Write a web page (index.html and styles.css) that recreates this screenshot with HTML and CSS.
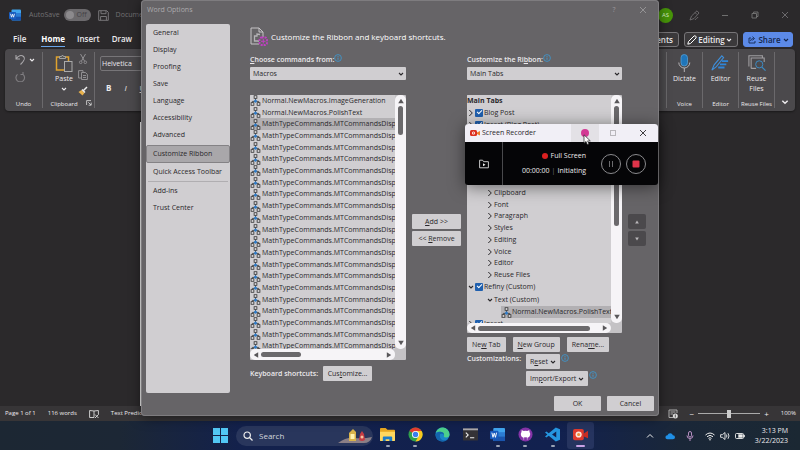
FILE: index.html
```
<!DOCTYPE html>
<html lang="en">
<head>
<meta charset="utf-8">
<title>Word Options</title>
<link rel="stylesheet" href="styles.css">
</head>
<body>
<svg class="defs" aria-hidden="true">
  <symbol id="macro" viewBox="0 0 11 12"><path d="M5.5 3.5v3M2 9V7h7v2" fill="none" stroke="#444" stroke-width="1"/><rect x="4" y=".8" width="3" height="2.8" fill="#e4e2e5" stroke="#333" stroke-width=".9"/><rect x=".7" y="8.4" width="3" height="2.8" fill="#e4e2e5" stroke="#333" stroke-width=".9"/><rect x="7.3" y="8.4" width="3" height="2.8" fill="#e4e2e5" stroke="#333" stroke-width=".9"/><path d="M5.5 4.6l2 2-2 2-2-2z" fill="#2f7cc9"/></symbol>
  <symbol id="down" viewBox="0 0 6 6"><path d="M1 2l2 2 2-2" fill="none" stroke="currentColor" stroke-width="1.1"/></symbol>
  <symbol id="right" viewBox="0 0 6 8"><path d="M1.3 1l3 3-3 3" fill="none" stroke="currentColor" stroke-width="1"/></symbol>
  <symbol id="info" viewBox="0 0 8 8"><circle cx="4" cy="4" r="3.4" fill="none" stroke="#3c9ad6" stroke-width=".8"/><path d="M4 3.6v2.2M4 2.1v.9" stroke="#3c9ad6" stroke-width=".9"/></symbol>
  <symbol id="tri" viewBox="0 0 6 6"><path d="M3 .8L5.8 5.2H.2z" fill="currentColor"/></symbol>
  <symbol id="cross" viewBox="0 0 8 8"><path d="M1 1l6 6M7 1L1 7" stroke="currentColor" stroke-width=".9"/></symbol>
</svg>

<main class="word">
  <header class="titlebar">
    <svg class="logo" viewBox="0 0 12 12"><rect x="2.5" y=".5" width="9.500" height="11" rx="1" fill="#41a5ee"/><path d="M2.500 4h9.500v3.500H2.500z" fill="#2b7cd3"/><path d="M2.500 7.500h9.500v3a1 1 0 0 1-1 1H3.500a1 1 0 0 1-1-1z" fill="#1551ae"/><rect y="3" width="7" height="7" rx=".8" fill="#1a5dbe"/><path d="M1.500 4.800l1 3.400 1-3 1 3 1-3.400" fill="none" stroke="#fff" stroke-width=".8"/></svg>
    <span>AutoSave</span>
    <button class="toggle" type="button" aria-label="AutoSave"><i></i>Off</button>
    <svg class="ico11" viewBox="0 0 11 11"><path d="M.7.7h8l1.600 1.600v8H.7zM3 .7v3h5v-3M2.600 10.300V6.500h5.800v3.800" fill="none" stroke="#777578" stroke-width="1"/></svg>
    <span class="doc">Document1</span>
    <span class="avatar">AS</span>
    <svg class="ico11 pen" viewBox="0 0 11 11"><path d="M1 10l1.500-4L8 .8 10 3 5 8.500zM6 2.500l2 2M6 10c1-2 2-1 3-3" fill="none" stroke="#706e70" stroke-width=".9"/></svg>
    <svg class="ico8" viewBox="0 0 8 8"><path d="M1 4.500h6" stroke="#777" stroke-width=".9"/></svg>
    <svg class="ico8" viewBox="0 0 8 8"><path d="M1 2.500h4.500V7H1zM2.600 2.300V1H7v4.500H5.700" fill="none" stroke="#777" stroke-width=".9"/></svg>
    <svg class="ico8 dim"><use href="#cross"/></svg>
  </header>
  <nav class="tabs">
    <a href="#file">File</a><a href="#home" class="on">Home</a><a href="#insert">Insert</a><a href="#draw">Draw</a>
    <button type="button" class="pill comments">Comments</button>
    <button type="button" class="pill"><svg class="ico10" viewBox="0 0 10 10"><path d="M.8 9.200L1.500 6.500 7 1q1-.6 1.700.1T9 3L3.500 8.500z" fill="none" stroke="#fff" stroke-width="1"/></svg>Editing<svg class="ico6"><use href="#down"/></svg></button>
    <button type="button" class="pill share"><svg class="ico8" viewBox="0 0 8 8"><path d="M3 2H1v5h6V5M2.500 5q.3-2.500 3-2.500M4.500.7l2 1.800-2 1.800" fill="none" stroke="#122850" stroke-width=".9"/></svg>Share<svg class="ico6"><use href="#down"/></svg></button>
  </nav>
  <section class="ribbon">
    <div class="group undo">
      <div class="stack">
        <span class="line"><svg class="ico11" viewBox="0 0 11 11"><path d="M1 1v4h4M1.200 4.800C3 1.500 6.500.5 8.500 2.500s1 4-3 8" fill="none" stroke="#a9a7aa" stroke-width="1.1"/></svg><svg class="ico6"><use href="#down"/></svg></span>
        <svg class="ico11" viewBox="0 0 11 11"><path d="M8 1v2.500h-2.500M8 3.300a4.300 4.300 0 1 1-5.500 0" fill="none" stroke="#807e81" stroke-width="1.100"/></svg>
      </div>
      <small>Undo</small>
    </div>
    <div class="group clip">
      <div class="paste">
        <button type="button" class="tool"><svg class="ico18" viewBox="0 0 18 18"><path d="M11 16H1.500V3H5m5 0h3.500v4" fill="none" stroke="#e0a32e" stroke-width="1.500"/><path d="M4.500 4.500v-2h2q1-3 2 0h2v2z" fill="#555" stroke="#aaa" stroke-width=".9"/><rect x="9.500" y="7.500" width="7.500" height="10" fill="#4c4a4d" stroke="#aaa"/></svg>Paste<svg class="ico6"><use href="#down"/></svg></button>
        <div class="minis">
          <svg class="ico10" viewBox="0 0 10 10"><path d="M2.500 0l4 7M7.500 0l-4 7" stroke="#99979a" stroke-width=".9"/><circle cx="2.700" cy="8.300" r="1.300" fill="none" stroke="#99979a" stroke-width=".8"/><circle cx="7.300" cy="8.300" r="1.300" fill="none" stroke="#99979a" stroke-width=".8"/></svg>
          <svg class="ico10" viewBox="0 0 10 10"><path d="M3 8H.6V.6H5V2M3.500 2.500h4L9.400 4.500v5H3.500zM5 5.500h3M5 7.500h3" fill="none" stroke="#99979a" stroke-width=".9"/></svg>
          <svg class="ico10" viewBox="0 0 10 10"><path d="M.5 6l3-2 3 3-2 2.500z" fill="#e8b04a"/><path d="M4 3.500l3 3M5.500 4.500L9 1" stroke="#eee" stroke-width="1.500"/></svg>
        </div>
      </div>
      <small>Clipboard<svg class="ico6 launch" viewBox="0 0 6 6"><path d="M.6 5V.6H5M2.300 2.300L5 5M5.200 2.600v2.600H2.600" fill="none" stroke="#ddd" stroke-width=".8"/></svg></small>
    </div>
    <div class="group font">
      <label><select aria-label="Font"><option>Helvetica</option></select></label>
      <div class="biu"><b>B</b><i>I</i><u>U</u></div>
    </div>
    <div class="group end"><button type="button" class="tool"><svg class="ico18" viewBox="0 0 18 18"><rect x="6" y=".5" width="6.500" height="11.500" rx="3.200" fill="#1f75b9" stroke="#5aa6dd" stroke-width=".7"/><path d="M3.800 8.500a5.500 5.500 0 0 0 11 0M9.300 14v4" fill="none" stroke="#b5b3b6"/></svg>Dictate</button><small>Voice</small></div>
    <div class="group end"><button type="button" class="tool"><svg class="ico18" viewBox="0 0 20 18"><path d="M1 17l2.500-6L12 1l2 2-8 10z" fill="none" stroke="#3d8fdc" stroke-width="1.200"/><path d="M12 7h7M10 10.500h7M8 14h7" stroke="#2f86da" stroke-width="2"/></svg>Editor</button><small>Editor</small></div>
    <div class="group end"><button type="button" class="tool"><svg class="ico18" viewBox="0 0 20 18"><path d="M1 13V1h15v3M3.500 15V3.500H18V8M3.500 15H9" fill="none" stroke="#a09ea1" stroke-width="1.200"/><circle cx="12.500" cy="10.500" r="4" fill="#4c4a4d" stroke="#3c8bc4" stroke-width="1.100"/><path d="M15.500 13.500L19.500 17.500" stroke="#3c8bc4" stroke-width="1.300"/></svg><span>Reuse<br>Files</span></button><small>Reuse Files</small></div>
    <div class="group more"><svg class="ico8"><use href="#down"/></svg></div>
  </section>
  <div class="canvas"><div class="page"></div></div>
  <footer class="status">
    <span>Page 1 of 1</span><span>116 words</span>
    <svg class="ico10" viewBox="0 0 10 9"><path d="M5 1.500v6.500H.6V1zM5 1.500L9.400 1v4M6 5l3.500 3.500M9.500 5L6 8.500" fill="none" stroke="#ddd" stroke-width=".9"/></svg>
    <span>Text Predictions: On</span>
    <svg class="ico10 focus" viewBox="0 0 10 10"><path d="M5 8.500H1V1h8v3M2.500 3h5M2.500 5H5" fill="none" stroke="#bbb" stroke-width=".9"/><circle cx="7.300" cy="7" r="2.500" fill="#ddd"/><path d="M7.300 5.500v3" stroke="#333" stroke-width=".8"/></svg>
    <span class="zoom"><span>−</span><input type="range" aria-label="Zoom" value="50"><span>+</span></span>
    <span>100%</span>
  </footer>
</main>

<section class="dialog" role="dialog" aria-label="Word Options">
  <header class="dlg-title"><span>Word Options</span><button type="button" class="bare">?</button><button type="button" class="bare" aria-label="Close"><svg class="ico8"><use href="#cross"/></svg></button></header>
  <div class="dlg-body">
    <nav class="side">
      <a href="#general">General</a><a href="#display">Display</a><a href="#proofing">Proofing</a><a href="#save">Save</a><a href="#language">Language</a><a href="#access">Accessibility</a><a href="#advanced">Advanced</a>
      <a href="#ribbon" class="sel">Customize Ribbon</a><a href="#qat">Quick Access Toolbar</a><hr><a href="#addins">Add-ins</a><a href="#trust">Trust Center</a>
    </nav>
    <div class="pane">
      <h1><svg class="ico20" viewBox="0 0 20 20"><path d="M9 17H1V1h8l4 4v5M9 1v4h4" fill="none" stroke="#c5c3c6" stroke-width="1"/><path d="M10 7.500L7 7v2H4.500v5H9" fill="none" stroke="#b5b3b6" stroke-width="1.300"/><rect x="9.500" y="10.500" width="7.500" height="7.500" rx="2" fill="none" stroke="#c13fc4" stroke-width="1.800" stroke-dasharray="2 1"/><path d="M11 14.300h4.500M13.300 12v4.500" stroke="#c13fc4"/></svg>Customize the Ribbon and keyboard shortcuts.</h1>
      <div class="cols">
        <div class="col">
          <label for="from"><span><u>C</u>hoose commands from:</span><svg class="ico8"><use href="#info"/></svg></label>
          <div class="combo"><select id="from"><option>Macros</option></select><svg class="ico6"><use href="#down"/></svg></div>
          <div class="box">
            <div class="view"><ul class="macros">
              <li><svg><use href="#macro"/></svg>Normal.NewMacros.ImageGeneration</li>
              <li><svg><use href="#macro"/></svg>Normal.NewMacros.PolishText</li>
              <li class="hit"><svg><use href="#macro"/></svg>MathTypeCommands.MTCommandsDisp</li>
              <li><svg><use href="#macro"/></svg>MathTypeCommands.MTCommandsDisp</li>
              <li><svg><use href="#macro"/></svg>MathTypeCommands.MTCommandsDisp</li>
              <li><svg><use href="#macro"/></svg>MathTypeCommands.MTCommandsDisp</li>
              <li><svg><use href="#macro"/></svg>MathTypeCommands.MTCommandsDisp</li>
              <li><svg><use href="#macro"/></svg>MathTypeCommands.MTCommandsDisp</li>
              <li><svg><use href="#macro"/></svg>MathTypeCommands.MTCommandsDisp</li>
              <li><svg><use href="#macro"/></svg>MathTypeCommands.MTCommandsDisp</li>
              <li><svg><use href="#macro"/></svg>MathTypeCommands.MTCommandsDisp</li>
              <li><svg><use href="#macro"/></svg>MathTypeCommands.MTCommandsDisp</li>
              <li><svg><use href="#macro"/></svg>MathTypeCommands.MTCommandsDisp</li>
              <li><svg><use href="#macro"/></svg>MathTypeCommands.MTCommandsDisp</li>
              <li><svg><use href="#macro"/></svg>MathTypeCommands.MTCommandsDisp</li>
              <li><svg><use href="#macro"/></svg>MathTypeCommands.MTCommandsDisp</li>
              <li><svg><use href="#macro"/></svg>MathTypeCommands.MTCommandsDisp</li>
              <li><svg><use href="#macro"/></svg>MathTypeCommands.MTCommandsDisp</li>
              <li><svg><use href="#macro"/></svg>MathTypeCommands.MTCommandsDisp</li>
              <li><svg><use href="#macro"/></svg>MathTypeCommands.MTCommandsDisp</li>
              <li><svg><use href="#macro"/></svg>MathTypeCommands.MTCommandsDisp</li>
              <li><svg><use href="#macro"/></svg>MathTypeCommands.MTCommandsDisp</li>
            </ul></div>
            <div class="vbar"><svg class="ico6"><use href="#tri"/></svg><i class="short"></i><svg class="ico6 flip"><use href="#tri"/></svg></div>
            <div class="hbar"><svg class="ico6 west"><use href="#tri"/></svg><i class="short"></i><svg class="ico6 east"><use href="#tri"/></svg></div>
          </div>
          <div class="keys"><span>Keyboard shortcuts:</span><button type="button" class="btn">Cus<u>t</u>omize...</button></div>
        </div>
        <div class="mid"><button type="button" class="btn"><u>A</u>dd &gt;&gt;</button><button type="button" class="btn">&lt;&lt; <u>R</u>emove</button></div>
        <div class="col">
          <label for="tabs"><span>Customize the Ri<u>b</u>bon:</span><svg class="ico8"><use href="#info"/></svg></label>
          <div class="combo"><select id="tabs"><option>Main Tabs</option></select><svg class="ico6"><use href="#down"/></svg></div>
          <div class="box tree">
            <div class="view">
              <div class="row"><b>Main Tabs</b></div>
              <div class="row l0"><svg><use href="#right"/></svg><label><input type="checkbox" checked>Blog Post</label></div>
              <div class="row l0"><svg><use href="#right"/></svg><label><input type="checkbox" checked>Insert (Blog Post)</label></div>
              <div class="sub">
                <div class="row l1"><svg><use href="#right"/></svg>Clipboard</div>
                <div class="row l1"><svg><use href="#right"/></svg>Font</div>
                <div class="row l1"><svg><use href="#right"/></svg>Paragraph</div>
                <div class="row l1"><svg><use href="#right"/></svg>Styles</div>
                <div class="row l1"><svg><use href="#right"/></svg>Editing</div>
                <div class="row l1"><svg><use href="#right"/></svg>Voice</div>
                <div class="row l1"><svg><use href="#right"/></svg>Editor</div>
                <div class="row l1"><svg><use href="#right"/></svg>Reuse Files</div>
              </div>
              <div class="row l0"><svg><use href="#down"/></svg><label><input type="checkbox" checked>Refiny (Custom)</label></div>
              <div class="row l1 text"><svg><use href="#down"/></svg>Text (Custom)</div>
              <div class="row l2"><span class="hit"><svg><use href="#macro"/></svg>Normal.NewMacros.PolishText</span></div>
              <div class="row l0"><svg><use href="#right"/></svg><label><input type="checkbox" checked>Insert</label></div>
            </div>
            <div class="vbar"><svg class="ico6"><use href="#tri"/></svg><i class="long"></i><svg class="ico6 flip"><use href="#tri"/></svg></div>
            <div class="hbar"><svg class="ico6 west"><use href="#tri"/></svg><i class="long"></i><svg class="ico6 east"><use href="#tri"/></svg></div>
          </div>
          <div class="newrow"><button type="button" class="btn">Ne<u>w</u> Tab</button><button type="button" class="btn"><u>N</u>ew Group</button><button type="button" class="btn">Rena<u>m</u>e...</button></div>
          <div class="custom"><span>Customizations:</span>
            <div class="resets">
              <div><button type="button" class="btn">R<u>e</u>set<svg class="ico6"><use href="#down"/></svg></button><svg class="ico8"><use href="#info"/></svg></div>
              <div><button type="button" class="btn">Im<u>p</u>ort/Export<svg class="ico6"><use href="#down"/></svg></button><svg class="ico8"><use href="#info"/></svg></div>
            </div>
          </div>
        </div>
        <div class="mid order"><button type="button" class="btn" aria-label="Move up"><svg><use href="#tri"/></svg></button><button type="button" class="btn" aria-label="Move down"><svg class="flip"><use href="#tri"/></svg></button></div>
      </div>
    </div>
  </div>
  <footer class="dlg-foot"><button type="button" class="btn">OK</button><button type="button" class="btn">Cancel</button></footer>
</section>

<section class="recorder" role="dialog" aria-label="Screen Recorder">
  <header><svg class="cam" viewBox="0 0 10 8"><rect y="1" width="7" height="6" rx="1.500" fill="#dc2f1e"/><path d="M7 3.500L10 2v4.500L7 5z" fill="#ef7d2b"/><circle cx="3.500" cy="4" r="1.600" fill="#fff"/><circle cx="3.500" cy="4" r=".8" fill="#dc2f1e"/></svg><span>Screen Recorder</span><i class="mini"><b></b></i><i class="max"></i><button type="button" class="bare" aria-label="Close"><svg class="ico8"><use href="#cross"/></svg></button></header>
  <div class="rec-body">
    <div class="folder"><svg class="ico10" viewBox="0 0 10 10"><path d="M.6 8.800V1.200h3l1 1.500h4.800v6.100z" fill="none" stroke="#ddd" stroke-width=".9"/><path d="M4 4.300l2.500 1.500L4 7.300z" fill="#eee"/></svg></div>
    <div class="info"><span><i class="dot"></i>Full Screen</span><span>00:00:00<em>|</em>Initiating</span></div>
    <button type="button" class="round" aria-label="Pause"><svg viewBox="0 0 8 8"><path d="M2.500 1v6M5.500 1v6" stroke="#77777a" stroke-width=".9"/></svg></button>
    <button type="button" class="round" aria-label="Stop"><svg viewBox="0 0 8 8"><rect x=".5" y=".5" width="7" height="7" rx="1" fill="#e0344a"/></svg></button>
  </div>
  <svg class="cursor" viewBox="0 0 8 12"><path d="M1 .8v8.400l2-1.800 1.300 3.200 1.600-.7-1.300-3H7.300z" fill="#fff" stroke="#222" stroke-width=".7"/></svg>
</section>

<footer class="taskbar">
  <div class="dock">
    <button type="button" class="bare start" aria-label="Start"><svg viewBox="0 0 15 15"><path d="M0 0h7v7H0zM8 0h7v7H8zM0 8h7v7H0zM8 8h7v7H8z" fill="#52c8f5"/></svg></button>
    <label class="search"><svg class="ico10" viewBox="0 0 10 10"><circle cx="4.200" cy="4.200" r="3.200" fill="none" stroke="#eee" stroke-width="1.200"/><path d="M6.500 6.500L9.500 9.500" stroke="#eee" stroke-width="1.300"/></svg><input type="search" placeholder="Search" aria-label="Search">
      <svg class="art" viewBox="0 0 34 16"><path d="M0 15q8-6 17-5t17-1q-2 6-8 6z" fill="#8b7f86"/><path d="M12 4l3-3 3 3v9h-7V5z" fill="#d9b34a"/><rect x="12.500" y="6" width="4" height="5" fill="#fff3b0"/><path d="M22 6l2-3 2 3 1 6q-3 2-6 0z" fill="#c43c44"/><circle cx="24" cy="9" r="1.500" fill="#f5c2a0"/></svg></label>
    <div class="apps">
      <a href="#explorer"><svg viewBox="0 0 16 16"><path d="M0 2q0-1 1-1h5l2 2h7q1 0 1 1v10H0z" fill="#e9a820"/><path d="M0 5h16v9q0 1-1 1H1q-1 0-1-1z" fill="#ffd75e"/><path d="M3 15v-4q0-1 1-1h8q1 0 1 1v4h-3v-2H6v2z" fill="#1c7cc8"/></svg><i></i></a>
      <a href="#chrome"><svg viewBox="0 0 16 16"><circle cx="8" cy="8" r="7.500" fill="#2fa04c"/><path d="M8 8L1.500 4.200A7.500 7.500 0 0 1 14.500 4.200z" fill="#e53c30"/><path d="M8 4.200h6.500A7.500 7.500 0 0 1 8 15.500l3.500-6z" fill="#fbc81e"/><circle cx="8" cy="8" r="3.800" fill="#fff"/><circle cx="8" cy="8" r="2.900" fill="#3b7ded"/></svg><i></i></a>
      <a href="#edge"><svg viewBox="0 0 16 16"><circle cx="8" cy="8" r="7.500" fill="#1a86c8"/><path d="M.8 6A7.500 7.500 0 0 1 15.500 8q0 3.200-3.500 3.200-3 0-2.500-1.500C10.500 7 8 5 5 5 3 5 1.500 5.500.8 6z" fill="#4ccf8c"/><path d="M5.500 7.500q-1.500 5 3 6.500 3 .5 5-1-1.800 2.500-5.500 2.500Q1 15 .5 8.500 2 5 5.500 5q4 0 4.200 3.500-2-2-4.200-1z" fill="#1464ac"/></svg></a>
      <a href="#terminal"><svg viewBox="0 0 16 16"><rect y="1.500" width="16" height="13" rx="1" fill="#343236"/><path d="M0 1.500h16v2H0z" fill="#aaa8ac"/><path d="M3 6l2.500 2.500L3 11M7.500 11.500H12" fill="none" stroke="#eee" stroke-width="1.200"/></svg></a>
      <a href="#word"><svg viewBox="0 0 16 16"><rect x="3.500" y="1" width="12.500" height="14" rx="1" fill="#41a5ee"/><path d="M3.500 5.500H16V10H3.500z" fill="#2b7cd3"/><path d="M3.500 10H16v5H3.500z" fill="#1a55ae"/><rect y="4" width="9" height="9" rx="1" fill="#185abd"/><path d="M2 6l1.200 5 1.300-4.500L5.800 11 7 6" fill="none" stroke="#fff"/></svg><i></i></a>
      <a href="#github"><svg viewBox="0 0 16 16"><circle cx="8" cy="8" r="7.500" fill="#8534a8"/><path d="M6 13.500v-2q-3-.8-3-4 0-1.200.8-2.200-.3-1 .2-1.900 1.200 0 2 .8 2-.5 4 0 .8-.8 2-.8.500 1 .2 1.900.8 1 .8 2.200 0 3.200-3 4v2z" fill="#fff"/><path d="M6.500 14v-3h3v3z" fill="#8534a8"/></svg><i></i></a>
      <a href="#code"><svg viewBox="0 0 16 16"><path d="M11.500.5L16 2.500v11l-4.500 2L4 9.300 1.500 11.200 0 10.200 2.500 8 0 5.800l1.500-1L4 6.700zM12 4.800L7.500 8l4.500 3.200z" fill="#2596e0" fill-rule="evenodd"/></svg><i></i></a>
      <a href="#recorder" class="live"><svg viewBox="0 0 16 16"><rect y="2" width="11.500" height="12" rx="2" fill="#e03a2e"/><path d="M11.500 7L16 4v8l-4.500-2z" fill="#c92d22"/><circle cx="6" cy="8" r="3.300" fill="#fde8dc"/><circle cx="6" cy="8" r="1.700" fill="#f08c3a"/></svg><i></i></a>
    </div>
  </div>
  <div class="tray">
    <svg class="ico8 up" viewBox="0 0 8 8"><path d="M1 5.500l3-3 3 3" fill="none" stroke="#eee" stroke-width="1"/></svg>
    <svg class="ico10 cloud" viewBox="0 0 12 10"><path d="M3 9a2.500 2.500 0 0 1 0-5 3.500 3.500 0 0 1 6.500 0A2.500 2.500 0 0 1 9.500 9z" fill="#1f8fe6"/></svg>
    <svg class="ico10 mic" viewBox="0 0 10 10"><rect x="3.500" y=".5" width="3" height="5.500" rx="1.500" fill="none" stroke="#c79ad0" stroke-width=".9"/><path d="M2 4.500q0 3 3 3t3-3M5 7.500V10" fill="none" stroke="#c79ad0" stroke-width=".9"/></svg>
    <svg class="ico10" viewBox="0 0 10 10"><path d="M.5 4q4.500-4 9 0M2 5.700q3-2.800 6 0M3.500 7.400q1.500-1.500 3 0" fill="none" stroke="#eee" stroke-width="1"/><circle cx="5" cy="8.700" r=".8" fill="#eee"/></svg>
    <svg class="ico10" viewBox="0 0 10 10"><path d="M.6 3.700h1.800L5 1.500v7L2.400 6.300H.6zM6.400 3.500q1 1.500 0 3M8 2.200q2 2.800 0 5.600" fill="none" stroke="#eee" stroke-width=".9"/></svg>
    <svg class="ico10" viewBox="0 0 10 10"><rect x=".5" y="2.500" width="8" height="5" rx="1" fill="none" stroke="#eee" stroke-width=".9"/><path d="M3.500 3.500h4v3h-4zM9.300 4h.6v2h-.6z" fill="#eee" stroke="#eee" stroke-width=".4"/></svg>
    <time>3:13 PM<br>3/22/2023</time>
  </div>
</footer>
</body>
</html>
```
FILE: styles.css
```
* { box-sizing: border-box; }
body { margin: 0; height: 100vh; display: flex; flex-direction: column; position: relative; overflow: hidden; background: #2b292b; color: #eceaed; font: 7px/1.4 "Open Sans", "Noto Sans", sans-serif; }
button, input, select { font: inherit; color: inherit; margin: 0; padding: 0; border: 0; background: none; border-radius: 0; }
a { color: inherit; text-decoration: none; }
svg { display: block; flex: none; }
ul { list-style: none; margin: 0; padding: 0; }
u { text-underline-offset: 1px; text-decoration-thickness: 1px; }
.defs { position: absolute; width: 0; height: 0; }
.ico6 { width: 6px; height: 6px; }
.ico8 { width: 8px; height: 8px; }
.ico10 { width: 10px; height: 10px; }
.ico11 { width: 11px; height: 11px; }
.ico18 { width: 18px; height: 18px; }
.ico20 { width: 20px; height: 20px; }
.flip { transform: rotate(180deg); }
.west { transform: rotate(-90deg); }
.east { transform: rotate(90deg); }
.bare { display: grid; place-items: center; }

/* Word window */
.word { flex: 1; min-height: 0; display: flex; flex-direction: column; }
.titlebar { height: 30px; display: flex; align-items: center; padding: 0 11px 0 9px; color: #737174; }
.titlebar .logo { width: 12px; height: 12px; margin-right: 8px; }
.toggle { width: 27px; height: 12px; margin: 0 7px 0 4px; padding: 0 4px 0 2px; border-radius: 6px; background: #6c6a6d; color: #444245; display: flex; align-items: center; justify-content: space-between; }
.toggle i { width: 8px; height: 8px; border-radius: 50%; background: #8c8a8d; }
.doc { margin-left: 7px; }
.avatar { width: 15px; height: 15px; margin-left: auto; border-radius: 50%; background: #479409; color: #d8edc8; font-size: 6px; line-height: 15px; text-align: center; }
.pen { margin: 0 21px 0 16px; }
.titlebar > .ico8 + .ico8 { margin-left: 22px; }
.tabs { height: 19px; display: flex; align-items: center; padding: 0 7px 0 13px; font-size: 8px; font-weight: 600; }
.tabs a { margin-right: 12px; line-height: 14px; border-bottom: 1px solid transparent; }
.tabs a:first-child { margin-right: 15px; }
.tabs .on { font-weight: 700; border-color: #6aa5e8; color: #fff; }
.pill { height: 15px; display: flex; align-items: center; justify-content: space-between; width: 54px; padding: 0 5px 0 2px; border: 1px solid #777578; border-radius: 3px; background: #3b393b; font-size: 8px; }
.pill + .pill { margin-left: 5px; }
.comments { width: 64px; margin-left: auto; justify-content: flex-end; }
.share { width: 50px; padding: 0 3px 0 4px; border-color: #5c8ae8; background: #5c8ae8; color: #14264c; }
.ribbon { height: 62px; margin: 0 5px; display: flex; border-radius: 4px; background: #4b494c; box-shadow: 0 1px 2px #1a191a; }
.group { margin: 3px 0; border-right: 1px solid #6b696c; display: flex; flex-direction: column; align-items: center; justify-content: space-between; width: 36px; }
.group small { font-size: 6px; line-height: 8px; white-space: nowrap; display: flex; }
.undo { width: 38px; }
.stack { display: grid; gap: 6px; margin: 2px 0 0 2px; }
.line { display: flex; align-items: center; gap: 3px; }
.clip { width: 52px; }
.clip small { gap: 8px; padding-left: 5px; }
.paste { display: flex; gap: 5px; padding-left: 6px; }
.tool { display: flex; flex-direction: column; align-items: center; line-height: 10px; padding-top: 2px; gap: 2px; }
.minis { display: grid; gap: 6px; align-content: start; padding-top: 2px; }
.font { margin-left: 5px; border: 0; width: 120px; align-items: stretch; justify-content: flex-start; gap: 12px; }
.font select { width: 100%; height: 15px; margin-top: 4px; padding-left: 1px; border: 1px solid #777578; border-radius: 2px; appearance: none; }
.biu { display: flex; gap: 13px; padding-left: 6px; font-size: 8px; line-height: 10px; }
.end:nth-of-type(4) { margin-left: auto; border-left: 1px solid #6b696c; width: 37px; }
.more { border: 0; width: 20px; justify-content: flex-end; padding-bottom: 2px; }
.canvas { flex: 1; padding: 11px 160px 0 140px; }
.page { height: 100%; background: #f2f2f2; }
.status { height: 15px; display: flex; align-items: center; gap: 12px; padding: 0 4px 0 5px; background: #373537; font-size: 6px; }
.status .focus { margin-left: auto; }
.zoom { display: flex; align-items: center; gap: 4px; font-size: 8px; }
.zoom input { width: 62px; height: 9px; appearance: none; background: linear-gradient(#aaa, #aaa) center / 100% 1px no-repeat; }
.zoom input::-webkit-slider-thumb { appearance: none; width: 4px; height: 8px; background: #ccc; }

/* Options dialog */
.dialog { position: absolute; left: 141px; top: 0; width: 518px; height: 416px; display: flex; flex-direction: column; border-radius: 4px; background: #666467; box-shadow: inset 0 0 0 1px #7e7c7f, 0 2px 12px rgba(0, 0, 0, .5); }
.dlg-title { height: 24px; display: flex; padding: 3px 9px 0 6px; color: #acaaad; line-height: 13px; }
.dlg-title span { margin-right: auto; }
.dlg-title .bare { width: 14px; height: 13px; color: #9a989b; }
.dlg-title .bare:first-of-type { margin-right: 15px; }
.dlg-body { flex: 1; min-height: 0; display: flex; padding-left: 5px; }
.side { width: 84px; border-radius: 2px; background: #d0ced1; color: #2a282b; }
.side a { display: block; line-height: 17px; padding-left: 7px; white-space: nowrap; }
.side .sel { margin-top: 2px; line-height: 16px; border: 1px solid #848285; border-radius: 2px; background: #a9a7aa; padding-left: 6px; }
.side hr { margin: 1px 2px; border: 0; border-top: 1px solid #b0aeb1; }
.side hr + a { margin-top: -1px; }
.pane { padding-left: 20px; }
h1 { display: flex; align-items: center; gap: 1px; margin: 3px 0 6px; height: 20px; font-size: 8px; font-weight: 400; color: #fff; }
.cols { display: grid; grid-template-columns: 156px 49px 155px 18px; column-gap: 6px; }
.col { min-width: 0; }
.col > label { display: flex; align-items: center; height: 14px; font-weight: 600; }
.col > label .ico8 { margin-bottom: 4px; }
.combo { display: grid; align-items: center; height: 13px; margin-bottom: 15px; border-radius: 1px; background: #d0ced1; color: #2a282b; }
.combo > * { grid-area: 1 / 1; }
.combo select { width: 100%; height: 13px; padding-left: 3px; appearance: none; }
.combo svg { justify-self: end; margin-right: 2px; pointer-events: none; }
.box { display: grid; grid-template: 254px 11px / 1fr 11px; border-radius: 1px; background: #c4c2c5; color: #2a282b; overflow: hidden; }
.tree { grid-template-rows: 228px 10px; }
.view { overflow: hidden; background: #d0ced1; white-space: nowrap; }
.macros { height: 257px; display: flex; flex-direction: column; }
.macros li { flex: 1 1 0; min-height: 0; display: flex; align-items: center; gap: 1px; }
.macros svg, .l2 svg { width: 11px; height: 11px; }
.hit { background: #b2b0b3; }
.vbar, .hbar { display: flex; align-items: center; background: #f6f4f7; color: #59575a; }
.vbar { flex-direction: column; padding: 3px 0; border-radius: 5px; }
.hbar { padding: 0 3px; border-radius: 5px; }
.vbar i { width: 5px; margin: 2px 0 auto; border-radius: 3px; background: #6b696c; }
.hbar i { height: 5px; margin: 0 auto 0 2px; border-radius: 3px; background: #6b696c; }
.vbar .short { height: 29px; }
.hbar .short { width: 40px; }
.vbar .long { height: 120px; }
.hbar .long { width: 112px; }
.row { display: flex; align-items: center; height: 12px; }
.row label { display: flex; align-items: center; gap: 1px; }
.row input { width: 8px; height: 8px; appearance: none; border-radius: 1px; background: #1f5fae; display: grid; place-items: center; }
.row input::after { content: ""; width: 4px; height: 2px; border: solid #fff; border-width: 0 0 1px 1px; transform: translateY(-1px) rotate(-45deg); }
.l0 { padding-left: 1px; }
.l0 > svg, .l1 > svg { width: 6px; height: 8px; margin-right: 1px; }
.l1 { padding-left: 20px; }
.l2 { padding-left: 34px; }
.l2 .hit { display: flex; align-items: center; width: 100%; height: 12px; }
.sub { height: 94px; margin-top: 56px; display: flex; flex-direction: column; }
.sub .row { flex: 1; height: auto; }
.text { margin-top: 1px; }
.btn { height: 15px; display: flex; align-items: center; justify-content: center; border-radius: 1px; background: #d0ced1; color: #2a282b; white-space: pre; }
.keys { display: flex; align-items: center; justify-content: space-between; padding-right: 34px; margin-top: 6px; font-weight: 600; }
.keys .btn { width: 49px; font-weight: 400; }
.mid { padding-top: 161px; display: grid; gap: 2px; align-content: start; }
.order .btn { background: #4b494c; color: #b9b7ba; border-radius: 2px; }
.order svg { width: 4px; height: 4px; }
.newrow { display: flex; gap: 7px; margin: 4px 0 2px; }
.newrow .btn { flex: none; padding: 0 5px; }
.custom { display: flex; justify-content: space-between; font-weight: 600; }
.custom .btn { padding: 0 4px; font-weight: 400; }
.custom .btn svg { margin-left: 2px; }
.resets { width: 96px; display: grid; gap: 2px; }
.resets > div { display: flex; }
.resets .ico8 { margin-left: 1px; }
.dlg-foot { display: flex; justify-content: flex-end; gap: 6px; padding: 3px 5px 5px; }
.dlg-foot .btn { width: 47px; }

/* Recorder window */
.recorder { position: absolute; left: 465px; top: 124px; width: 193px; height: 61px; display: flex; flex-direction: column; border-radius: 3px; background: #050507; box-shadow: 0 2px 16px rgba(0, 0, 0, .5); }
.recorder header { height: 18px; display: flex; align-items: center; padding-left: 5px; border-radius: 3px 3px 0 0; background: #f1eff6; color: #2b292c; }
.cam { width: 10px; height: 8px; margin-right: 2px; }
.recorder header span { margin-right: auto; }
.mini { width: 28px; height: 18px; display: grid; place-items: center; background: #e3e1e6; }
.mini b { width: 8px; height: 8px; border-radius: 50%; background: #d33a94; }
.max { width: 6px; height: 6px; margin: 0 11px; border: 1px solid #b9b7bc; }
.recorder .bare { width: 31px; }
.rec-body { flex: 1; display: flex; align-items: center; padding-right: 12px; gap: 5px; }
.folder { width: 38px; align-self: stretch; display: grid; place-items: center; border-right: 1px solid #49494c; }
.info { flex: 1; display: grid; gap: 5px; justify-items: end; padding-right: 10px; }
.info span { display: flex; align-items: center; }
.info em { margin: 0 2px; color: #77777a; font-style: normal; }
.dot { width: 6px; height: 6px; margin-right: 3px; border-radius: 50%; background: #da2020; }
.round { width: 20px; height: 20px; display: grid; place-items: center; border: 1px solid #8a8a8d; border-radius: 50%; }
.round svg { width: 8px; height: 8px; }
.cursor { position: absolute; left: 118px; top: 10px; width: 8px; height: 12px; }

/* Taskbar */
.taskbar { height: 29px; display: grid; grid-template-columns: 1fr 388px 1fr; align-items: center; background: linear-gradient(90deg, #1c2733 0, #1c2735 15%, #13214c 30%, #12214f 70%, #1a2738 85%, #1b2833); }
.dock { grid-column: 2; display: flex; align-items: center; height: 29px; }
.start { width: 28px; }
.start svg { width: 15px; height: 15px; }
.search { width: 137px; height: 20px; margin: 0 1px 0 2px; padding: 0 1px 0 7px; display: flex; align-items: center; gap: 6px; border-radius: 10px; background: #29365c; font-size: 8px; }
.search input { flex: 1; min-width: 0; outline: 0; }
.search input::placeholder { color: #d4d6de; opacity: 1; }
.art { width: 34px; height: 16px; }
.apps { flex: 1; display: flex; height: 27px; }
.apps a { flex: 1; display: flex; flex-direction: column; align-items: center; justify-content: flex-end; gap: 3px; padding-bottom: 2px; border-radius: 3px; }
.apps a:not(:has(i)) { padding-bottom: 7px; }
.apps svg { width: 15px; height: 15px; }
.apps i { width: 4px; height: 2px; border-radius: 1px; background: #9ba3b5; }
.apps .live { background: #26345f; }
.live i { width: 9px; background: #c9a2e6; }
.tray { display: flex; align-items: center; justify-content: flex-end; gap: 5px; padding-right: 12px; }
.up { margin-right: 6px; }
.cloud, .mic { margin-right: 5px; }
.tray time { margin-left: 5px; text-align: right; line-height: 10px; }
```
